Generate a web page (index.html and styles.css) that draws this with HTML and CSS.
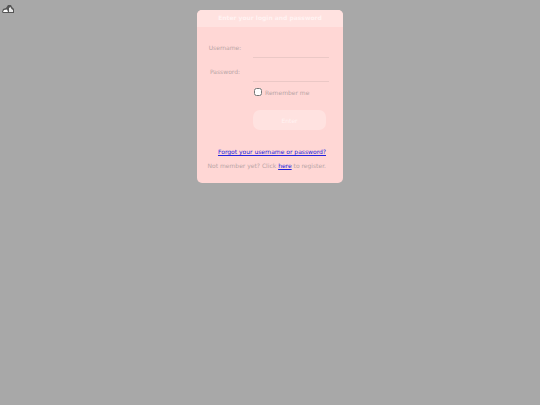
FILE: index.html
```html
<!DOCTYPE html>
<html lang="en">
<head>
    <meta charset="utf-8">
    <title>Login</title>
    <link rel="stylesheet" href="styles.css">
</head>
<body>
    <svg class="logo" width="14" height="10" viewBox="0 0 14 10">
        <path d="M1 8 L2 5 L5 4 L7 1 L10 1 L11 3 L13 5 L13 9 L2 9 Z" fill="#555"/>
        <path d="M2 8 L3 6 L6 5.5 L7 8 Z" fill="#fff"/>
        <path d="M8 8 L8 4 L9.5 3 L10.5 5 L12 6 L12 8 Z" fill="#e8e8e8"/>
    </svg>
    <div class="login-box">
        <h2 class="login-title">Enter your login and password</h2>
        <form class="login-form">
            <div class="form-row">
                <label for="username">Username:</label>
                <input type="text" id="username">
            </div>
            <div class="form-row">
                <label for="password">Password:</label>
                <input type="password" id="password">
            </div>
            <div class="remember-row">
                <input type="checkbox" id="remember">
                <label for="remember">Remember me</label>
            </div>
            <div class="button-row">
                <button type="button">Enter</button>
            </div>
            <p class="forgot"><a href="#">Forgot your username or password?</a></p>
            <p class="register">Not member yet? Click <a href="#">here</a> to register.</p>
        </form>
    </div>
</body>
</html>
```
FILE: styles.css
```css
body {
    margin: 0;
    height: 405px;
    overflow: hidden;
    background-color: #a8a8a8;
    font-family: "DejaVu Sans", sans-serif;
    font-size: 6px;
    color: #b9a5a5;
    text-rendering: geometricPrecision;
}
.logo {
    position: absolute;
    left: 1px;
    top: 4px;
}
.login-box {
    width: 146px;
    height: 173px;
    margin: 10px auto 0;
    background-color: #ffd7d5;
    border-radius: 5px;
    overflow: hidden;
}
.login-title {
    height: 17px;
    margin: 0;
    background-color: #ffe2e0;
    color: #fff3f2;
    font-size: 6px;
    font-weight: bold;
    line-height: 18px;
    text-align: center;
}
.login-form {
    padding-top: 7px;
}
.form-row {
    display: flex;
    align-items: center;
    height: 24px;
}
.form-row label {
    width: 56px;
    margin-top: 4px;
    text-align: center;
}
.form-row input {
    width: 76px;
    height: 24px;
    padding: 0;
    box-sizing: border-box;
    background: transparent;
    border: none;
    border-bottom: 1px solid #ebc8c6;
    outline: none;
}
.remember-row {
    display: flex;
    align-items: center;
    height: 14px;
    margin-top: 3px;
    padding-left: 57px;
}
.remember-row input {
    width: 8px;
    height: 8px;
    margin: 0 3px 0 0;
}
.remember-row label {
    margin-top: 3px;
}
.button-row {
    margin-top: 11px;
    padding-left: 56px;
}
.button-row button {
    display: block;
    width: 73px;
    height: 20px;
    padding: 0;
    background-color: #ffe2e0;
    border: none;
    border-radius: 7px;
    color: #fff3f2;
    font-family: inherit;
    font-size: 6px;
}
.forgot,
.register {
    margin: 0;
    padding-right: 17px;
    text-align: right;
}
.forgot {
    margin-top: 19px;
}
.register {
    margin-top: 7px;
}
a {
    color: #2222dd;
}
```
